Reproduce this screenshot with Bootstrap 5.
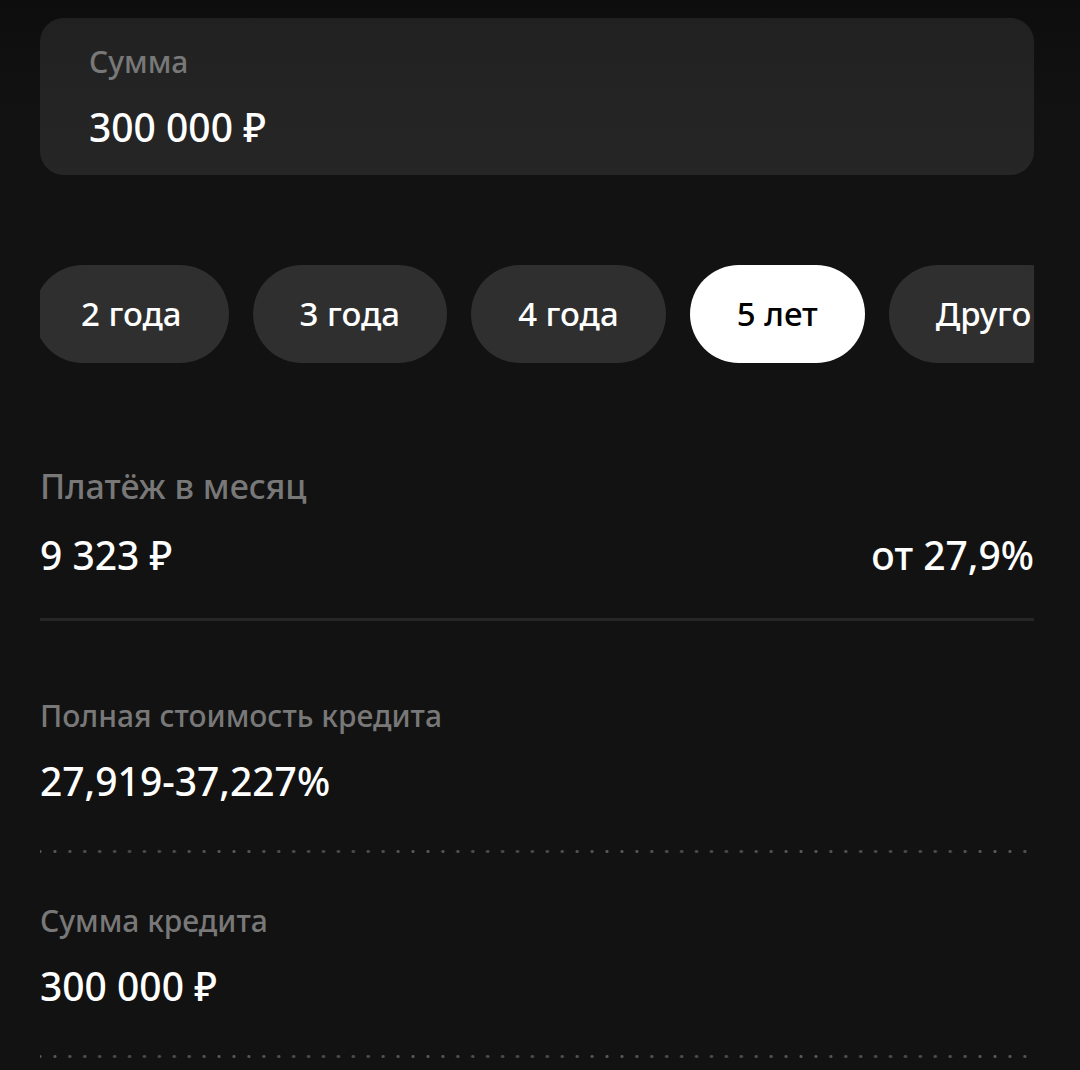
<!DOCTYPE html>
<html lang="ru" data-bs-theme="dark">
<head>
<meta charset="utf-8">
<meta name="viewport" content="width=device-width, initial-scale=1">
<title>Кредит</title>
<link href="https://cdn.jsdelivr.net/npm/bootstrap@5.3.0/dist/css/bootstrap.min.css" rel="stylesheet">
<style>
  body {
    background: #121212 linear-gradient(#0d0d0d, #121212) no-repeat 0 0 / 100% 110px;
    color: #fff;
    font-family: "Noto Sans", "Open Sans", sans-serif;
  }
  .calc { padding: 18px 46px 12px 40px; }
  .amount {
    background: linear-gradient(#212121, #262626);
    border-radius: 24px;
    padding: 24px 49px 22px;
  }
  .caption { display: block; font-size: 30px; line-height: 40px; font-weight: 500; color: #787878; margin: 0 0 19px; }
  .caption-lg { font-size: 34px; margin-bottom: 23px; }
  .figure-text, .amount-input { font-size: 39px; line-height: 52px; font-weight: 500; color: #fff; margin: 0; }
  .amount-input { display: block; height: 52px; padding: 0; border: 0; background: none; outline: 0; }
  .terms { margin: 90px 0 103px; overflow: hidden; }
  .terms-track { gap: 24px; margin-left: -6px; }
  .term {
    --bs-btn-color: #fff; --bs-btn-bg: #2f2f2f; --bs-btn-border-width: 0;
    --bs-btn-hover-color: #fff; --bs-btn-hover-bg: #383838;
    --bs-btn-active-color: #000; --bs-btn-active-bg: #fff;
    --bs-btn-font-size: 33px; --bs-btn-line-height: 42px; --bs-btn-font-weight: 500;
    --bs-btn-padding-x: 47px; --bs-btn-padding-y: 28px;
    --bs-btn-border-radius: 49px;
    white-space: nowrap; flex: none;
  }
  .payment { padding-bottom: 37px; border-bottom: 3px solid #262626; margin-bottom: 75px; }
  .dotted {
    height: 3px; margin: 43px 0 48px; padding-right: 9px;
    background:
      radial-gradient(circle at 0 50%, #5c5c5c 1px, transparent 2px),
      radial-gradient(circle at 100% 50%, #5c5c5c 1px, transparent 2px);
    background-size: 15px 3px;
    background-repeat: round no-repeat;
    background-origin: content-box;
  }
  .dotted:last-child { margin-bottom: 0; }
</style>
</head>
<body>
<main class="calc">
  <div class="amount">
    <label class="caption" for="amount">Сумма</label>
    <input class="amount-input w-100" id="amount" type="text" inputmode="numeric" value="300 000 ₽">
  </div>

  <div class="terms" role="radiogroup" aria-label="Срок">
    <div class="terms-track d-flex">
      <input class="btn-check" type="radio" name="term" id="term2"><label class="btn term" for="term2">2 года</label>
      <input class="btn-check" type="radio" name="term" id="term3"><label class="btn term" for="term3">3 года</label>
      <input class="btn-check" type="radio" name="term" id="term4"><label class="btn term" for="term4">4 года</label>
      <input class="btn-check" type="radio" name="term" id="term5" checked><label class="btn term" for="term5">5 лет</label>
      <input class="btn-check" type="radio" name="term" id="termx"><label class="btn term" for="termx">Друго</label>
    </div>
  </div>

  <section class="payment">
    <h2 class="caption caption-lg">Платёж в месяц</h2>
    <div class="d-flex justify-content-between">
      <p class="figure-text">9 323 ₽</p>
      <p class="figure-text">от 27,9%</p>
    </div>
  </section>

  <section>
    <h2 class="caption">Полная стоимость кредита</h2>
    <p class="figure-text">27,919-37,227%</p>
  </section>
  <div class="dotted"></div>
  <section>
    <h2 class="caption">Сумма кредита</h2>
    <p class="figure-text">300 000 ₽</p>
  </section>
  <div class="dotted"></div>
</main>
<script src="https://cdn.jsdelivr.net/npm/bootstrap@5.3.0/dist/js/bootstrap.bundle.min.js"></script>
</body>
</html>
